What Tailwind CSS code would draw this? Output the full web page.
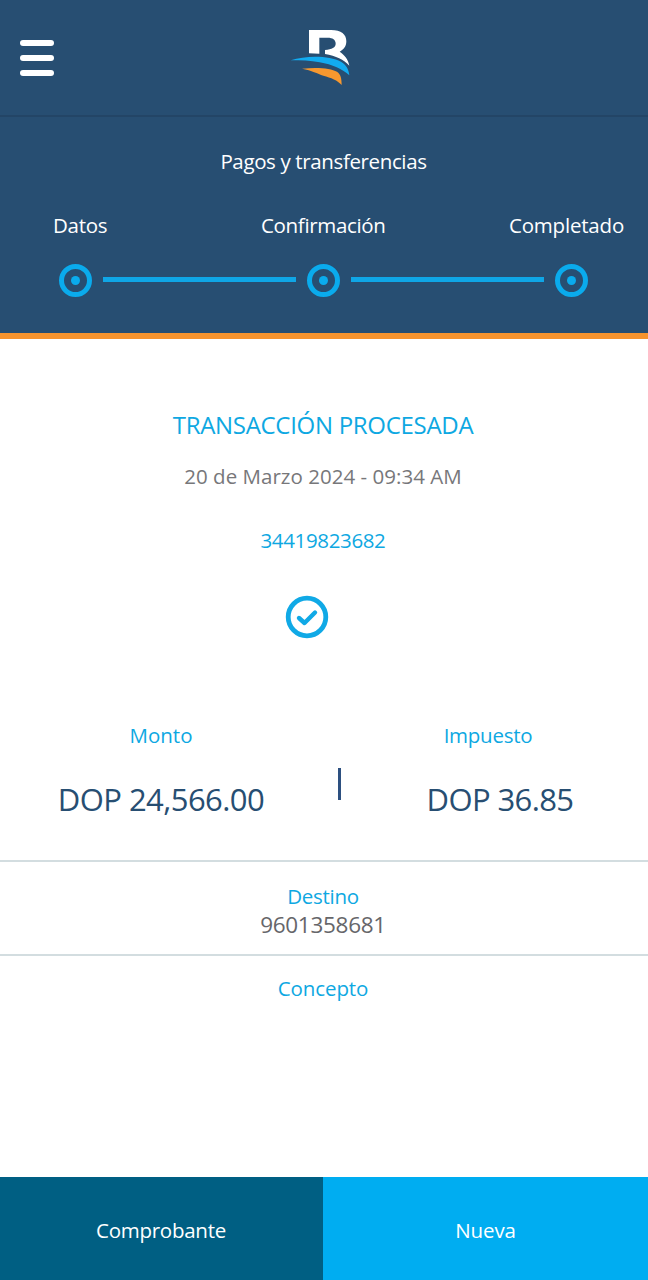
<!DOCTYPE html>
<html lang="es">
<head>
<meta charset="utf-8">
<meta name="viewport" content="width=device-width, initial-scale=1">
<title>Pagos y transferencias</title>
<script src="https://cdn.jsdelivr.net/npm/@tailwindcss/browser@4"></script>
</head>
<body class="flex h-[1280px] w-[648px] flex-col overflow-hidden bg-white font-['Open_Sans','Noto_Sans',sans-serif] text-[20.5px] whitespace-nowrap">
  <header class="grid h-[117px] grid-cols-3 border-b-2 border-[#234566] bg-[#274e72]">
    <button class="mt-[40px] ml-5 flex h-9 w-[34px] flex-col justify-between" aria-label="Menú">
      <span class="h-1.5 w-full rounded-full bg-white"></span>
      <span class="h-1.5 w-full rounded-full bg-white"></span>
      <span class="h-1.5 w-full rounded-full bg-white"></span>
    </button>
    <svg class="mt-5 ml-16 h-[75px] w-20" viewBox="0 0 240 225">
      <path fill="#fff" d="M87 30H153C184 30 199 43 199 64C199 79 191 89 179 95C194 105 204 117 208 137C191 118 168 108 135 102V90C156 88 167 82 167 71C167 59 158 53 143 53H118V101L87 100Z"/>
      <path fill="#12abf0" d="M32 121C80 105 149 107 183 125C198 134 206 146 208 166C188 147 157 134 119 127C91 122 63 121 32 121Z"/>
      <path fill="#f7982f" d="M66 146C110 141 153 144 171 155C182 163 185 174 185 195C173 181 153 173 130 167C112 161 96 151 66 146Z"/>
    </svg>
  </header>

  <section class="flex h-[222px] flex-col border-b-6 border-[#f7942e] bg-[#274e72] text-white">
    <h1 class="mt-7 h-8 pr-px text-center leading-8 tracking-[-0.37px]"><span>Pagos y transferencias</span></h1>
    <div class="mt-8 flex h-8 pl-[53px] leading-8">
      <span class="w-[208px] tracking-[-0.3px]">Datos</span>
      <span class="w-[248px] tracking-[-0.33px]">Confirmación</span>
      <span class="tracking-[-0.2px]">Completado</span>
    </div>
    <div class="mt-[22px] flex h-[34px] items-center justify-between pr-[60px] pl-[59px]">
      <span class="flex size-[33px] items-center justify-center rounded-full border-5 border-[#0aabed]"><i class="size-[9px] rounded-full bg-[#0aabed]"></i></span>
      <span class="mb-px h-[5px] w-[193px] bg-[#0fa6e6]"></span>
      <span class="flex size-[33px] items-center justify-center rounded-full border-5 border-[#0aabed]"><i class="size-[9px] rounded-full bg-[#0aabed]"></i></span>
      <span class="mb-px h-[5px] w-[193px] bg-[#0fa6e6]"></span>
      <span class="flex size-[33px] items-center justify-center rounded-full border-5 border-[#0aabed]"><i class="size-[9px] rounded-full bg-[#0aabed]"></i></span>
    </div>
  </section>

  <main class="flex grow flex-col text-[#0ea8e2]">
    <h2 class="mt-[70px] h-8 pr-0.5 text-center text-[24px] leading-8 tracking-[-0.3px]">TRANSACCIÓN PROCESADA</h2>
    <p class="mt-[19px] h-8 pr-0.5 text-center leading-8 tracking-[0.03px] text-[#77777a]">20 de Marzo 2024 - 09:34 AM</p>
    <p class="mt-8 h-8 pr-0.5 text-center leading-8 tracking-[-0.36px]">34419823682</p>
    <svg class="mt-[39px] ml-[285px] size-11 shrink-0" viewBox="0 0 44 44" fill="none" stroke="#10a9e6">
      <circle cx="22" cy="22" r="18.8" stroke-width="4.8"/>
      <path d="M14 23L19.5 28L30 17.5" stroke-width="4.4" stroke-linecap="round" stroke-linejoin="round"/>
    </svg>
    <div class="mt-20 flex h-[143px] border-b-2 border-[#d3dde0]">
      <div class="flex w-[322px] flex-col items-center">
        <span class="h-8 leading-8">Monto</span>
        <span class="mt-7 h-10 text-[31px] leading-10 tracking-[-0.55px] text-[#274e72]">DOP 24,566.00</span>
      </div>
      <i class="mt-[49px] ml-4 h-8 w-[3px] bg-[#2d5080]"></i>
      <div class="ml-[19px] flex w-[280px] flex-col items-center">
        <span class="mr-6 h-8 leading-8 tracking-[-0.25px]">Impuesto</span>
        <span class="mt-7 h-10 text-[31px] leading-10 tracking-[-0.6px] text-[#274e72]">DOP 36.85</span>
      </div>
    </div>
    <div class="flex h-[94px] flex-col items-center border-b-2 border-[#d3dde0] pt-[18px] pr-0.5">
      <span class="h-[29px] leading-8 tracking-[-0.3px]">Destino</span>
      <span class="h-8 text-[22.5px] leading-8 tracking-[-0.3px] text-[#66666a]">9601358681</span>
    </div>
    <p class="mt-4 h-8 pr-0.5 text-center leading-8 tracking-[-0.1px]">Concepto</p>
  </main>

  <footer class="flex h-[103px] text-white">
    <button class="w-[323px] bg-[#005f83] pt-[3px] pr-px tracking-[-0.27px]"><span>Comprobante</span></button>
    <button class="grow bg-[#00adf1] pt-[3px] tracking-[-0.1px]"><span>Nueva</span></button>
  </footer>
</body>
</html>
